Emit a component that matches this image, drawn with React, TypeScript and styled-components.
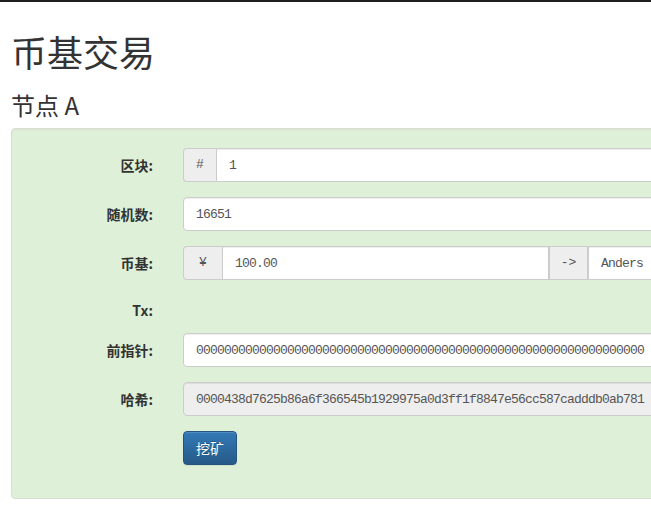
import React from 'react'
import styled, { createGlobalStyle } from 'styled-components'

const GlobalStyle = createGlobalStyle`
  html, body {
    margin: 0;
    padding: 0;
    background: #fff;
    overflow: hidden;
  }
  body {
    font-family: "Noto Sans CJK SC", "Liberation Sans", sans-serif;
    font-size: 14px;
    line-height: 1.42857;
    color: #333;
  }
`

const MONO = `"Liberation Mono", "Noto Sans CJK SC", monospace`

const TopBar = styled.div`
  height: 2px;
  background: #1e1e1e;
`

const Page = styled.div`
  display: flex;
  flex-direction: column;
  padding: 0 11px;
  width: 960px;
`

const Title = styled.h1`
  margin: 30px 0 0;
  font-size: 36px;
  font-weight: 400;
  line-height: 1.1;
  color: #333;
`

const NodeTitle = styled.h3`
  margin: 20px 0 10px;
  font-size: 24px;
  font-weight: 400;
  line-height: 1.1;
  color: #333;
`

const Well = styled.div`
  display: flex;
  flex-direction: column;
  gap: 15px;
  padding: 19px 19px 33px;
  background: #dff0d8;
  border: 1px solid #d9ddd6;
  border-radius: 4px;
  box-shadow: inset 0 1px 1px rgba(0, 0, 0, 0.05);
`

const Row = styled.div<{ $height?: number }>`
  display: flex;
  align-items: flex-start;
  gap: 30px;
  height: ${({ $height }) => ($height ? `${$height}px` : 'auto')};
`

const Label = styled.label<{ $top?: number }>`
  width: 122px;
  flex: none;
  padding-top: ${({ $top }) => ($top ?? 7)}px;
  text-align: right;
  font-weight: 700;
  font-size: 14px;
  line-height: 20px;
  color: #333;
`

const Field = styled.div`
  flex: 1;
  display: flex;
  min-width: 0;
`

const Addon = styled.span<{ $width: number; $first?: boolean }>`
  flex: none;
  box-sizing: border-box;
  width: ${({ $width }) => $width}px;
  height: 34px;
  display: flex;
  align-items: center;
  justify-content: center;
  background: #eee;
  border: 1px solid #ccc;
  border-right: ${({ $first }) => ($first ? '0' : '1px solid #ccc')};
  border-radius: ${({ $first }) => ($first ? '4px 0 0 4px' : '0')};
  font-family: ${MONO};
  font-size: 13px;
  color: #555;
`

const Input = styled.div<{ $readOnly?: boolean; $basis?: number; $edge?: 'left' | 'right' | 'none' | 'both' }>`
  box-sizing: border-box;
  height: 34px;
  padding: 7px 12px 5px;
  display: flex;
  align-items: center;
  flex: ${({ $basis }) => ($basis ? `0 0 ${$basis}px` : '1')};
  background: ${({ $readOnly }) => ($readOnly ? '#eee' : '#fff')};
  border: 1px solid #ccc;
  border-radius: ${({ $edge }) =>
    $edge === 'left' ? '4px 0 0 4px' : $edge === 'right' ? '0 4px 4px 0' : $edge === 'none' ? '0' : '4px'};
  box-shadow: inset 0 1px 1px rgba(0, 0, 0, 0.075);
  font-family: ${MONO};
  font-size: 13px;
  letter-spacing: -0.8px;
  color: #555;
  white-space: nowrap;
  overflow: hidden;
`

const MineButton = styled.button`
  box-sizing: border-box;
  height: 34px;
  padding: 6px 12px;
  font-family: "Noto Sans CJK SC", sans-serif;
  font-size: 14px;
  line-height: 20px;
  color: #fff;
  text-shadow: 0 -1px 0 rgba(0, 0, 0, 0.2);
  background-image: linear-gradient(to bottom, #337ab7 0, #265a88 100%);
  border: 1px solid #245580;
  border-radius: 4px;
  box-shadow: inset 0 1px 0 rgba(255, 255, 255, 0.15), 0 1px 1px rgba(0, 0, 0, 0.075);
  cursor: pointer;
`

const block = {
  number: 1,
  nonce: 16651,
  amount: '100.00',
  to: 'Anders',
  prev: '0'.repeat(64),
  hash: '0000438d7625b86a6f366545b1929975a0d3ff1f8847e56cc587cadddb0ab781',
}

export default function App() {
  return (
    <>
      <GlobalStyle />
      <TopBar />
      <Page>
        <Title>币基交易</Title>
        <NodeTitle>节点 A</NodeTitle>
        <Well>
          <Row>
            <Label>区块:</Label>
            <Field>
              <Addon $width={33} $first>#</Addon>
              <Input $edge="right">{block.number}</Input>
            </Field>
          </Row>
          <Row>
            <Label>随机数:</Label>
            <Field>
              <Input>{block.nonce}</Input>
            </Field>
          </Row>
          <Row>
            <Label>币基:</Label>
            <Field>
              <Addon $width={39} $first>¥</Addon>
              <Input $edge="none" $basis={327}>{block.amount}</Input>
              <Addon $width={39}>-&gt;</Addon>
              <Input $edge="right">{block.to}</Input>
            </Field>
          </Row>
          <Row $height={23}>
            <Label $top={5}>Tx:</Label>
          </Row>
          <Row>
            <Label>前指针:</Label>
            <Field>
              <Input>{block.prev}</Input>
            </Field>
          </Row>
          <Row>
            <Label>哈希:</Label>
            <Field>
              <Input $readOnly>{block.hash}</Input>
            </Field>
          </Row>
          <Row>
            <Label />
            <MineButton>挖矿</MineButton>
          </Row>
        </Well>
      </Page>
    </>
  )
}
